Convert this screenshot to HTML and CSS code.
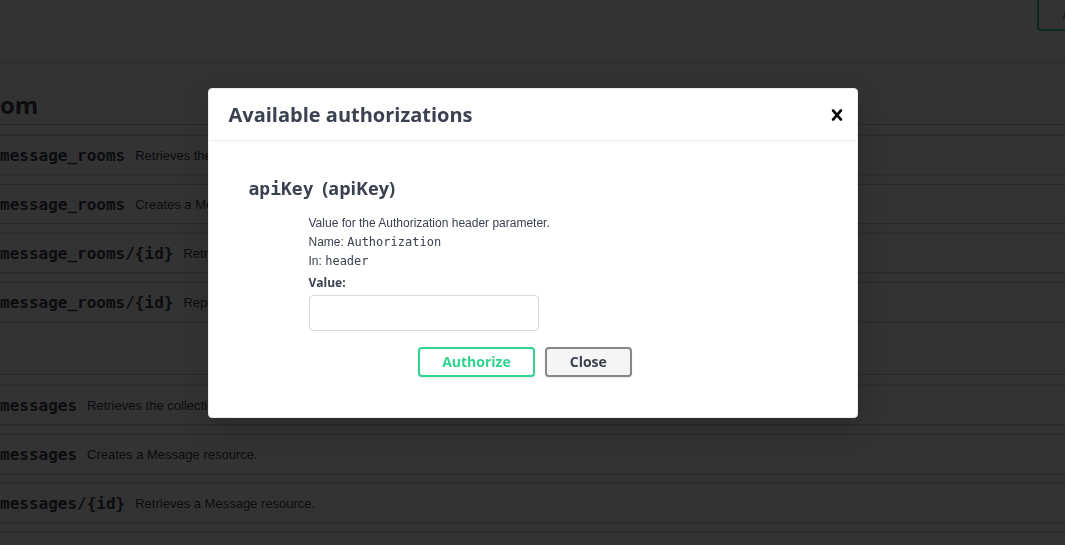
FILE: index.html
```html
<!DOCTYPE html>
<html lang="en">
<head>
<meta charset="utf-8">
<title>API Docs - Available authorizations</title>
<link rel="stylesheet" href="styles.css">
</head>
<body>
<div class="page">
  <div class="topbar">
    <button class="btn-top-auth" type="button">Authorize</button>
  </div>

  <section class="tag-section first">
    <h3 class="tag">om</h3>
    <div class="ops">
      <div class="op"><span class="path">message_rooms</span><span class="desc">Retrieves the collection of MessageRoom resources.</span></div>
      <div class="op"><span class="path">message_rooms</span><span class="desc">Creates a MessageRoom resource.</span></div>
      <div class="op"><span class="path">message_rooms/{id}</span><span class="desc">Retrieves a MessageRoom resource.</span></div>
      <div class="op"><span class="path">message_rooms/{id}</span><span class="desc">Replaces the MessageRoom resource.</span></div>
    </div>
  </section>

  <section class="tag-section">
    <h3 class="tag">&nbsp;</h3>
    <div class="ops">
      <div class="op"><span class="path">messages</span><span class="desc">Retrieves the collection of Message resources.</span></div>
      <div class="op"><span class="path">messages</span><span class="desc">Creates a Message resource.</span></div>
      <div class="op"><span class="path">messages/{id}</span><span class="desc">Retrieves a Message resource.</span></div>
      <div class="op"><span class="path">messages/{id}</span><span class="desc">Replaces the Message resource.</span></div>
    </div>
  </section>
</div>

<div class="backdrop"></div>

<div class="dialog">
  <div class="modal">
    <div class="modal-header">
      <h3>Available authorizations</h3>
      <button class="close-modal" type="button" aria-label="Close">
        <svg width="20" height="20" viewBox="1 1 18 18" aria-hidden="true">
          <path d="M14.348 14.849c-.469.469-1.229.469-1.697 0L10 11.819l-2.651 3.029c-.469.469-1.229.469-1.697 0-.469-.469-.469-1.229 0-1.697l2.758-3.15-2.759-3.152c-.469-.469-.469-1.228 0-1.697.469-.469 1.228-.469 1.697 0L10 8.183l2.651-3.031c.469-.469 1.228-.469 1.697 0 .469.469.469 1.229 0 1.697l-2.758 3.152 2.758 3.15c.469.469.469 1.229 0 1.698z" fill="#000"/>
        </svg>
      </button>
    </div>
    <div class="modal-content">
      <div class="auth-container">
        <h4><code>apiKey</code> (apiKey)</h4>
        <div class="auth-body">
          <div class="info">
            <p>Value for the Authorization header parameter.</p>
            <p>Name: <code>Authorization</code></p>
            <p>In: <code>header</code></p>
          </div>
          <label class="value-label" for="apikey">Value:</label>
          <input id="apikey" class="value-input" type="text">
        </div>
        <div class="auth-btn-wrapper">
          <button class="btn btn-authorize" type="button">Authorize</button>
          <button class="btn btn-close" type="button">Close</button>
        </div>
      </div>
    </div>
  </div>
</div>
</body>
</html>
```

FILE: styles.css
```css
html, body {
  margin: 0;
  padding: 0;
  overflow: hidden;
  background: #fff;
}

body {
  font-family: "Open Sans", "Liberation Sans", sans-serif;
  color: #3b4151;
}

.page {
  width: 100%;
}

/* top bar with partly visible authorize button */
.topbar {
  height: 62px;
  display: flex;
  justify-content: flex-end;
  align-items: flex-start;
  margin-right: -120px;
  background: #fff;
  box-shadow: 0 1px 2px 0 rgba(0, 0, 0, .15);
  position: relative;
}

.btn-top-auth {
  width: 148px;
  height: 40px;
  margin-top: -9px;
  padding: 6px 0 0 23px;
  text-align: left;
  background: transparent;
  border: 2px solid #49cc90;
  border-radius: 4px;
  color: #49cc90;
  font: 700 14px/16px "Open Sans", sans-serif;
}

/* tag sections */
.tag-section {
  margin-top: 5px;
}

.tag-section.first {
  margin-top: 15px;
}

.tag {
  margin: 0;
  padding: 11px 0 2px 0;
  font: 700 24px/34px "Open Sans", sans-serif;
  color: #3b4151;
  border-bottom: 1px solid rgba(59, 65, 81, .3);
}

.ops {
  display: flex;
  flex-direction: column;
  gap: 9px;
  padding-top: 10px;
}

.op {
  height: 38px;
  display: flex;
  align-items: center;
  background: #fff;
  border-style: solid;
  border-color: #cfcfcf;
  border-width: 1px 0;
  box-shadow: 0 0 3px rgba(0, 0, 0, .19);
}

.path {
  font: 700 16px "DejaVu Sans Mono", monospace;
  color: #3b4151;
  padding-right: 10px;
  white-space: nowrap;
}

.desc {
  font: 13px "Liberation Sans", Arial, sans-serif;
  color: #3b4151;
  white-space: nowrap;
}

/* overlay */
.backdrop {
  position: fixed;
  inset: 0;
  background: rgba(0, 0, 0, .8);
}

.dialog {
  position: fixed;
  inset: 0;
  display: flex;
  justify-content: center;
  align-items: flex-start;
  padding-top: 88px;
}

.modal {
  width: 650px;
  box-sizing: border-box;
  background: #fff;
  border: 1px solid #ebebeb;
  border-radius: 4px;
  box-shadow: 0 10px 30px 0 rgba(0, 0, 0, .2);
}

.modal-header {
  display: flex;
  align-items: center;
  padding: 12px 0;
  border-bottom: 1px solid #ebebeb;
}

.modal-header h3 {
  flex: 1;
  margin: 0;
  padding: 0 20px;
  font: 700 20px/27px "Open Sans", sans-serif;
  color: #3b4151;
}

.close-modal {
  background: none;
  border: none;
  padding: 0 10px;
  display: flex;
  align-items: center;
  cursor: pointer;
}

.modal-content {
  padding: 20px;
}

.auth-container {
  padding: 10px 20px;
}

.auth-container h4 {
  margin: 5px 0 13px;
  font: 700 18px/25px "Open Sans", sans-serif;
  color: #3b4151;
}

.auth-container h4 code {
  font: 700 18px/25px "DejaVu Sans Mono", monospace;
  padding-right: 4px;
}

.auth-body {
  padding-left: 60px;
  display: flex;
  flex-direction: column;
  align-items: flex-start;
}

.info p {
  margin: 0;
  font: 12px/19px "Liberation Sans", Arial, sans-serif;
  color: #3b4151;
}

.info code {
  font: 12px/19px "DejaVu Sans Mono", monospace;
}

.value-label {
  margin-top: 3px;
  font: 700 12px/17px "Open Sans", sans-serif;
  color: #3b4151;
}

.value-input {
  width: 230px;
  height: 36px;
  box-sizing: border-box;
  margin: 4px 0 5px;
  padding: 8px 10px;
  border: 1px solid #d9d9d9;
  border-radius: 4px;
  background: #fff;
  font: 14px "Open Sans", sans-serif;
}

.auth-btn-wrapper {
  display: flex;
  justify-content: center;
  gap: 10px;
  padding: 11px 15px 10px 0;
}

.btn {
  height: 30px;
  box-sizing: border-box;
  border-radius: 4px;
  border: 2px solid #888;
  box-shadow: 0 1px 2px rgba(0, 0, 0, .1);
  font: 700 14px/16px "Open Sans", sans-serif;
  padding: 5px 23px;
  cursor: pointer;
}

.btn-authorize {
  padding: 5px 22px;
  background: #fff;
  border-color: #2fd58c;
  color: #2fd58c;
}

.btn-close {
  background: #f5f5f5;
  border-color: #888;
  color: #3b4151;
}
```
